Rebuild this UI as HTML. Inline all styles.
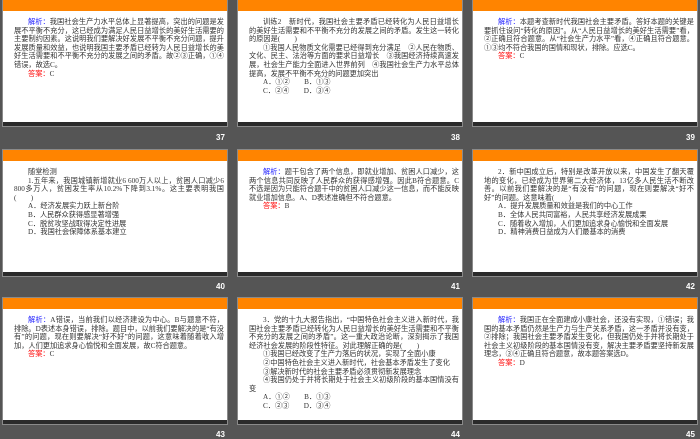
<!DOCTYPE html>
<html><head><meta charset="utf-8"><style>
*{margin:0;padding:0;box-sizing:border-box}
body{width:700px;height:438px;background:#555;position:relative;overflow:hidden;font-family:"Liberation Serif","Noto Sans CJK SC",sans-serif}
.s{position:absolute;width:226px;height:128px;background:#fff;border:1px solid #8a8a8a}
.s .o{position:absolute;left:0;top:0;right:0;height:11px;background:#ff8400}
.s .d{position:absolute;left:0;bottom:0;right:0;height:4px;background:#2a2a2a}
.s .t{position:absolute;left:11px;right:3px;top:18px;font-size:7.2px;line-height:8.6px;color:#333;text-align:justify}
.t div{height:auto}
.i{text-indent:14px}
.b{color:#2020ff}.r{color:#f00}
.p{padding-left:14px}
.n{position:absolute;color:#fff;font:bold 8px "Liberation Sans",sans-serif}
</style></head><body>

<div class="s" style="left:2px;top:-1px"><div class="o"></div><div class="t">
<div class="i"><span class="b">解析：</span>我国社会生产力水平总体上显著提高，突出的问题是发展不平衡不充分，这已经成为满足人民日益增长的美好生活需要的主要制约因素。这说明我们要解决好发展不平衡不充分问题，提升发展质量和效益，也说明我国主要矛盾已经转为人民日益增长的美好生活需要和不平衡不充分的发展之间的矛盾。故②③正确，①④错误，故选C。</div>
<div class="i"><span class="r">答案：</span>C</div></div><div class="d"></div></div>
<div class="n" style="left:216px;top:133px">37</div>

<div class="s" style="left:237px;top:-1px"><div class="o"></div><div class="t">
<div class="i">训练2　新时代，我国社会主要矛盾已经转化为人民日益增长的美好生活需要和不平衡不充分的发展之间的矛盾。发生这一转化的原因是(　　)</div>
<div class="i">①我国人民物质文化需要已经得到充分满足　②人民在物质、文化、民主、法治等方面的要求日益增长　③我国经济持续高速发展，社会生产能力全面进入世界前列　④我国社会生产力水平总体提高，发展不平衡不充分的问题更加突出</div>
<div class="p">A．①②　　B．①③</div>
<div class="p">C．②④　　D．③④</div></div><div class="d"></div></div>
<div class="n" style="left:451px;top:133px">38</div>

<div class="s" style="left:472px;top:-1px"><div class="o"></div><div class="t">
<div class="i"><span class="b">解析：</span>本题考查新时代我国社会主要矛盾。答好本题的关键是要抓住设问“转化的原因”。从“人民日益增长的美好生活需要”看，②正确且符合题意。从“社会生产力水平”看，④正确且符合题意。①③均不符合我国的国情和现状，排除。应选C。</div>
<div class="i"><span class="r">答案：</span>C</div></div><div class="d"></div></div>
<div class="n" style="left:686px;top:133px">39</div>

<div class="s" style="left:2px;top:149px"><div class="o"></div><div class="t">
<div class="p">随堂检测</div>
<div class="i">1.五年来，我国城镇新增就业6 600万人以上，贫困人口减少6 800多万人，贫困发生率从10.2%下降到3.1%。这主要表明我国(　　)</div>
<div class="p">A．经济发展实力跃上新台阶</div>
<div class="p">B．人民群众获得感显著增强</div>
<div class="p">C．脱贫攻坚战取得决定性进展</div>
<div class="p">D．我国社会保障体系基本建立</div></div><div class="d"></div></div>
<div class="n" style="left:216px;top:282px">40</div>

<div class="s" style="left:237px;top:149px"><div class="o"></div><div class="t">
<div class="i"><span class="b">解析：</span>题干包含了两个信息，即就业增加、贫困人口减少，这两个信息共同反映了人民群众的获得感增强。因此B符合题意。C不选是因为只能符合题干中的贫困人口减少这一信息，而不能反映就业增加信息。A、D表述准确但不符合题意。</div>
<div class="i"><span class="r">答案：</span>B</div></div><div class="d"></div></div>
<div class="n" style="left:451px;top:282px">41</div>

<div class="s" style="left:472px;top:149px"><div class="o"></div><div class="t">
<div class="i">2．新中国成立后，特别是改革开放以来，中国发生了翻天覆地的变化，已经成为世界第二大经济体，13亿多人民生活不断改善。以前我们要解决的是“有没有”的问题，现在则要解决“好不好”的问题。这意味着(　　)</div>
<div class="p">A．提升发展质量和效益是我们的中心工作</div>
<div class="p">B．全体人民共同富裕，人民共享经济发展成果</div>
<div class="p">C．随着收入增加，人们更加追求身心愉悦和全面发展</div>
<div class="p">D．精神消费日益成为人们最基本的消费</div></div><div class="d"></div></div>
<div class="n" style="left:686px;top:282px">42</div>

<div class="s" style="left:2px;top:297px"><div class="o"></div><div class="t">
<div class="i"><span class="b">解析：</span>A错误，当前我们以经济建设为中心。B与题意不符，排除。D表述本身错误，排除。题目中，以前我们要解决的是“有没有”的问题，现在则要解决“好不好”的问题，这意味着随着收入增加，人们更加追求身心愉悦和全面发展，故C符合题意。</div>
<div class="i"><span class="r">答案：</span>C</div></div><div class="d"></div></div>
<div class="n" style="left:216px;top:430px">43</div>

<div class="s" style="left:237px;top:297px"><div class="o"></div><div class="t">
<div class="i">3．党的十九大报告指出，“中国特色社会主义进入新时代，我国社会主要矛盾已经转化为人民日益增长的美好生活需要和不平衡不充分的发展之间的矛盾”。这一重大政治论断，深刻揭示了我国经济社会发展的阶段性特征。对此理解正确的是(　　)</div>
<div class="i">①我国已经改变了生产力落后的状况，实现了全面小康</div>
<div class="i">②中国特色社会主义进入新时代，社会基本矛盾发生了变化</div>
<div class="i">③解决新时代的社会主要矛盾必须贯彻新发展理念</div>
<div class="i">④我国仍处于并将长期处于社会主义初级阶段的基本国情没有变</div>
<div class="p">A．①②　　B．①③</div>
<div class="p">C．②③　　D．③④</div></div><div class="d"></div></div>
<div class="n" style="left:451px;top:430px">44</div>

<div class="s" style="left:472px;top:297px"><div class="o"></div><div class="t">
<div class="i"><span class="b">解析：</span>我国正在全面建成小康社会，还没有实现，①错误；我国的基本矛盾仍然是生产力与生产关系矛盾，这一矛盾并没有变，②排除；我国社会主要矛盾发生变化，但我国仍处于并将长期处于社会主义初级阶段的基本国情没有变，解决主要矛盾要坚持新发展理念，③④正确且符合题意，故本题答案选D。</div>
<div class="i"><span class="r">答案：</span>D</div></div><div class="d"></div></div>
<div class="n" style="left:686px;top:430px">45</div>

</body></html>
